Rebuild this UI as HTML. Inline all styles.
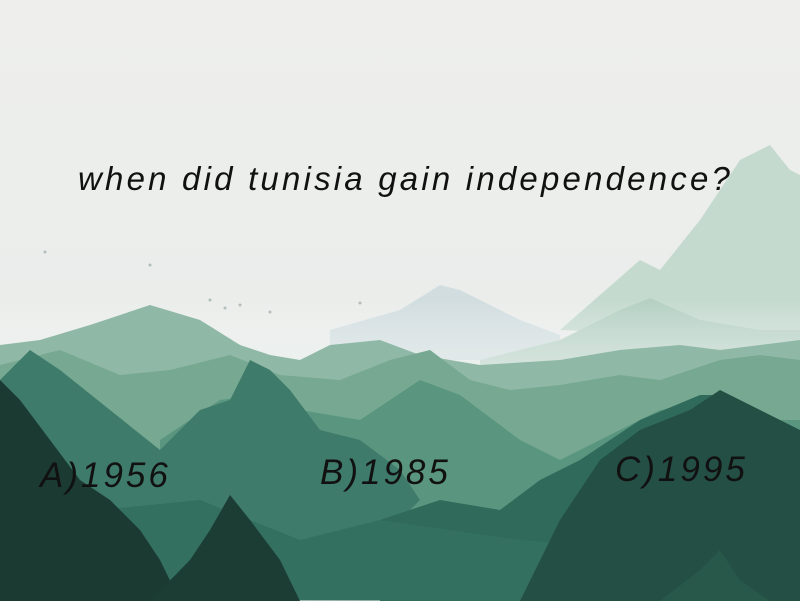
<!DOCTYPE html>
<html><head><style>
html,body{margin:0;padding:0;width:800px;height:601px;overflow:hidden;background:#eeefed}
svg{position:absolute;left:0;top:0}
.t{position:absolute;font-family:"Liberation Sans",sans-serif;font-style:italic;color:#111;white-space:nowrap}
</style></head><body>
<svg width="800" height="601" viewBox="0 0 800 601">
<defs>
<linearGradient id="bg" x1="0" y1="0" x2="0" y2="1"><stop offset="0" stop-color="#eeefed"/><stop offset="1" stop-color="#e6ebe8"/></linearGradient>
<linearGradient id="fog" x1="0" y1="0" x2="0" y2="1"><stop offset="0" stop-color="#ffffff" stop-opacity="0"/><stop offset="1" stop-color="#e8efec" stop-opacity="0.7"/></linearGradient>
</defs>
<rect width="800" height="601" fill="url(#bg)"/>
<polygon fill="#c5dacf" points="560,330 640,260 660,270 700,220 740,160 770,145 790,170 800,175 800,340"/>
<polygon fill="#d2dde0" points="330,330 400,310 440,285 460,290 480,300 520,320 560,335 560,360 330,360"/>
<polygon fill="#b5d0c3" points="480,360 560,340 620,310 650,298 700,320 760,330 800,330 800,380 480,380"/>
<rect x="0" y="300" width="800" height="80" fill="url(#fog)"/>
<polygon fill="#8fb9a6" points="0,345 40,340 90,325 150,305 200,320 240,345 270,355 300,360 330,345 380,340 420,355 480,365 560,360 620,350 680,345 720,350 800,340 800,420 0,420"/>
<polygon fill="#76a892" points="0,365 60,350 120,375 170,370 230,355 280,375 340,380 390,360 430,350 470,380 510,390 560,385 620,375 660,380 720,360 760,355 800,360 800,520 0,520"/>
<polygon fill="#5a967f" points="160,440 220,400 260,395 300,410 360,420 420,380 460,395 520,440 560,460 600,440 660,410 700,405 760,420 800,420 800,520 160,520"/>
<polygon fill="#3f7b6a" points="0,380 30,350 60,370 110,410 160,450 200,410 230,400 250,360 270,370 290,390 320,430 360,440 400,470 420,500 380,540 0,540"/>
<polygon fill="#2f6a5a" points="380,520 440,500 500,510 540,480 580,460 610,440 640,420 700,395 720,395 760,410 800,440 800,601 380,601"/>
<polygon fill="#34705f" points="0,600 0,520 200,500 300,540 380,520 520,540 800,560 800,601"/>
<polygon fill="#244f44" points="560,520 600,460 640,430 690,410 720,390 760,410 800,430 800,601 520,601"/>
<polygon fill="#1b3b32" points="0,380 20,400 50,440 80,480 110,500 140,530 160,560 180,601 0,601"/>
<polygon fill="#1c3d33" points="150,601 190,560 210,530 230,495 250,520 280,560 300,601"/>
<polygon fill="#285849" points="660,601 700,570 720,550 740,580 770,601"/>
<g fill="#9aa" opacity="0.7"><circle cx="150" cy="265" r="1.5"/><circle cx="210" cy="300" r="1.5"/><circle cx="225" cy="308" r="1.5"/><circle cx="240" cy="305" r="1.5"/><circle cx="270" cy="312" r="1.5"/><circle cx="360" cy="303" r="1.5"/><circle cx="45" cy="252" r="1.5"/></g>
</svg>
<div class="t" style="left:78px;top:160px;font-size:33px;letter-spacing:3.2px;">when did tunisia gain independence?</div>
<div class="t" style="left:40px;top:456px;font-size:35px;letter-spacing:3px;">A)1956</div>
<div class="t" style="left:320px;top:453px;font-size:35px;letter-spacing:3px;">B)1985</div>
<div class="t" style="left:615px;top:450px;font-size:35px;letter-spacing:3px;">C)1995</div>
</body></html>
